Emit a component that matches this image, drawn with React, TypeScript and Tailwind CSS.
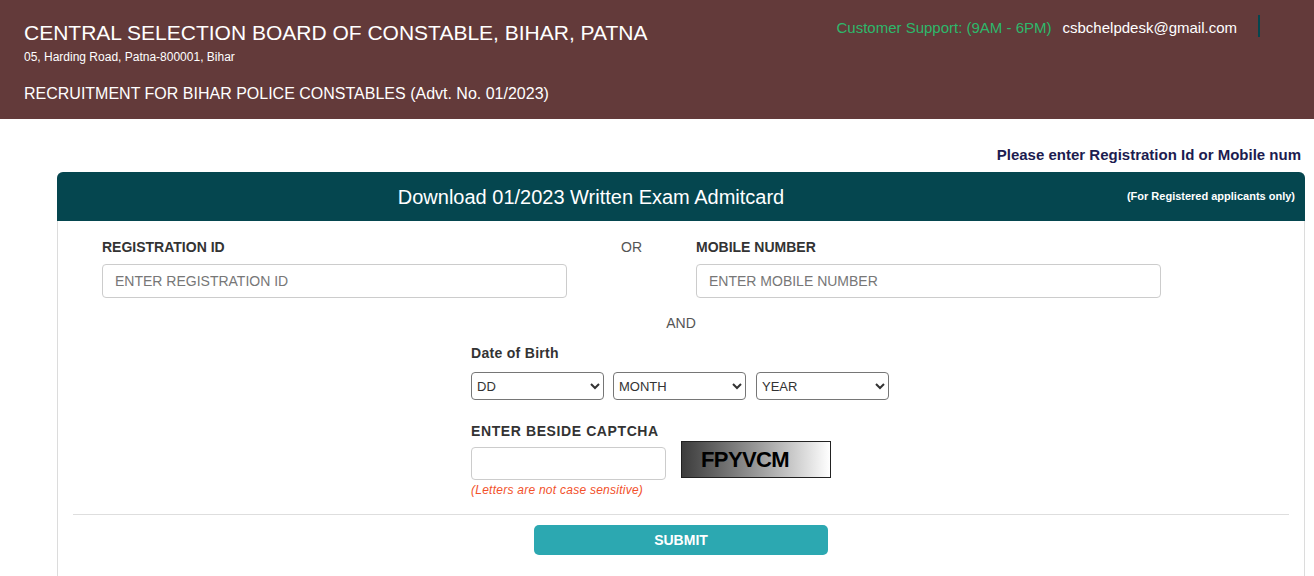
export default function App() {
  return (
    <div className="min-h-[576px] bg-white font-[family-name:Liberation_Sans,Arial,sans-serif] text-[#333]">
      <Header />
      <div className="flex justify-end pr-[13px] pt-[26px] pb-[7px]">
        <p className="text-[15px] leading-[20px] font-bold text-[#1c1c50]">
          Please enter Registration Id or Mobile num
        </p>
      </div>
      <div className="ml-[57px] mr-[9px] rounded-t-[6px] border border-b-0 border-[#dcdcdc]">
        <div className="-mx-px -mt-px flex h-[49px] items-center rounded-t-[6px] bg-[#05464f] text-white">
          <h1 className="flex-1 text-center text-[20px] leading-[28px]">Download 01/2023 Written Exam Admitcard</h1>
          <span className="w-[180px] pr-[10px] text-right text-[11px] font-bold">(For Registered applicants only)</span>
        </div>
        <FormBody />
      </div>
    </div>
  )
}

const Header = () => {
  return (
    <header className="flex h-[119px] justify-between bg-[#633a3a] pl-6 pr-[54px] text-white">
      <div className="pt-[19px]">
        <div className="text-[21px] leading-[28px]">CENTRAL SELECTION BOARD OF CONSTABLE, BIHAR, PATNA</div>
        <div className="mt-[2px] text-[12px] leading-[16px]">05, Harding Road, Patna-800001, Bihar</div>
        <div className="mt-[18px] text-[16px] leading-[22px]">RECRUITMENT FOR BIHAR POLICE CONSTABLES (Advt. No. 01/2023)</div>
      </div>
      <div className="flex items-start gap-[11px] pt-[18px] text-[15px] leading-[20px]">
        <span className="text-[#2db86b]">Customer Support: (9AM - 6PM)</span>
        <span>csbchelpdesk@gmail.com</span>
        <span className="ml-[10px] mt-[-3px] h-[22px] w-[2px] bg-[#05464f]" />
      </div>
    </header>
  )
}

const FormBody = () => {
  return (
    <div className="px-[15px] pt-[16px]">
      <div className="flex pl-[29px]">
        <Field label="REGISTRATION ID" placeholder="ENTER REGISTRATION ID" />
        <div className="w-[129px] text-center text-[14px] leading-[20px] text-[#555]">OR</div>
        <Field label="MOBILE NUMBER" placeholder="ENTER MOBILE NUMBER" />
      </div>
      <div className="mt-[15px] text-center text-[14px] leading-[20px] text-[#555]">AND</div>
      <div className="mt-[10px] ml-[398px] w-[418px]">
        <div className="text-[14px] leading-[20px] font-bold tracking-[0.3px]">Date of Birth</div>
        <div className="mt-[9px] flex">
          <DateSelect text="DD" className="mr-[9px]" />
          <DateSelect text="MONTH" className="mr-[10px]" />
          <DateSelect text="YEAR" />
        </div>
        <div className="mt-[21px] flex items-start">
          <div className="w-[195px]">
            <div className="text-[14px] leading-[20px] font-bold tracking-[0.6px] whitespace-nowrap">ENTER BESIDE CAPTCHA</div>
            <input className="mt-[6px] h-[33px] w-[195px] rounded-[4px] border border-[#ccc] px-3 text-[14px]" />
            <div className="mt-[2px] text-[12px] leading-[16px] italic tracking-[0.25px] whitespace-nowrap text-[#f2512a]">
              (Letters are not case sensitive)
            </div>
          </div>
          <div className="mt-[20px] ml-[15px] flex h-[37px] w-[150px] items-center border border-[#222] bg-gradient-to-r from-[#3d3d3d] to-white pl-[19px]">
            <span className="text-[22px] leading-none font-bold tracking-[-0.6px] text-black">FPYVCM</span>
          </div>
        </div>
      </div>
      <div className="mt-[16px] border-t border-[#dedede]" />
      <div className="flex justify-center pt-[10px] pb-[30px]">
        <button className="h-[30px] w-[294px] rounded-[5px] bg-[#2ca8b1] text-[14px] font-bold text-white">SUBMIT</button>
      </div>
    </div>
  )
}

const Field = ({ label, placeholder }: { label: string; placeholder: string }) => {
  return (
    <div className="w-[465px]">
      <label className="block text-[14px] leading-[20px] font-bold">{label}</label>
      <input
        placeholder={placeholder}
        className="mt-[7px] h-[34px] w-full rounded-[4px] border border-[#ccc] px-[12px] text-[14px] placeholder:text-[#777]"
      />
    </div>
  )
}

const DateSelect = ({ text, className }: { text: string; className?: string }) => {
  return (
    <select
      defaultValue={text}
      className={`h-[28px] w-[133px] rounded-[4px] border border-[#767676] bg-white pl-[1px] text-[13px] text-[#333] ${className ?? ''}`}
    >
      <option value={text}>{text}</option>
    </select>
  )
}
